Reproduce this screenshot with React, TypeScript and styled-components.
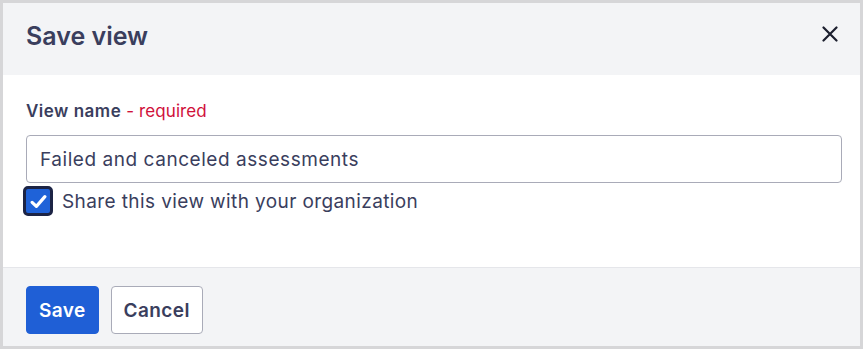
import React from "react";
import styled, { createGlobalStyle } from "styled-components";

const Global = createGlobalStyle`
  html, body { margin: 0; padding: 0; background: #d6d6d8; }
  body { font-family: Inter, "Noto Sans", sans-serif; }
`;

const Dialog = styled.div`
  box-sizing: border-box;
  width: 863px;
  height: 349px;
  border: 3px solid #d6d6d8;
  display: flex;
  flex-direction: column;
  background: #fff;
`;

const Header = styled.header`
  box-sizing: border-box;
  height: 72px;
  background: #f3f4f6;
  display: flex;
  align-items: flex-start;
  justify-content: space-between;
  padding: 18px 23px 0;
`;

const Title = styled.h2`
  margin: 0;
  font-size: 25px;
  line-height: 30px;
  font-weight: 600;
  color: #3a3e5d;
`;

const CloseButton = styled.button`
  border: 0;
  background: none;
  padding: 0;
  width: 24px;
  height: 24px;
  display: flex;
  align-items: center;
  justify-content: center;
  margin: 1px -5px 0 0;
  cursor: pointer;
`;

const Body = styled.div`
  flex: 1;
  padding: 26px 18px 0 23px;
`;

const Label = styled.label`
  display: block;
  font-size: 17px;
  line-height: 20px;
  font-weight: 600;
  letter-spacing: 0.5px;
  color: #3a3e5d;
  margin-bottom: 14px;
`;

const Required = styled.span`
  font-weight: 400;
  letter-spacing: 0.1px;
  color: #d0103a;
  margin-left: 5px;
`;

const Input = styled.input`
  box-sizing: border-box;
  display: block;
  width: 100%;
  height: 48px;
  border: 1px solid #a9abb8;
  border-radius: 4px;
  padding: 0 13px;
  font-family: inherit;
  font-size: 19px;
  letter-spacing: 0.55px;
  color: #3a3e5d;
  outline: none;
`;

const CheckRow = styled.label`
  display: flex;
  align-items: center;
  gap: 9px;
  margin-top: 3px;
  margin-left: -3px;
  font-size: 19px;
  letter-spacing: 0.4px;
  color: #3a3e5d;
`;

const Box = styled.span`
  box-sizing: border-box;
  width: 30px;
  height: 30px;
  border-radius: 5px;
  border: 3px solid #1c2445;
  background: #1f62d8;
  display: flex;
  align-items: center;
  justify-content: center;
`;

const Footer = styled.footer`
  box-sizing: border-box;
  height: 79px;
  background: #f3f4f6;
  border-top: 1px solid #e5e6ea;
  display: flex;
  align-items: flex-start;
  gap: 12px;
  padding: 18px 23px 0;
`;

const Button = styled.button<{ $primary?: boolean }>`
  height: 48px;
  padding: 0 12px;
  border-radius: 4px;
  font-family: inherit;
  font-size: 19px;
  letter-spacing: 0.4px;
  font-weight: 600;
  cursor: pointer;
  border: 1px solid ${(p) => (p.$primary ? "#1f5fd6" : "#a9abb8")};
  background: ${(p) => (p.$primary ? "#1f5fd6" : "#fff")};
  color: ${(p) => (p.$primary ? "#fff" : "#3a3e5d")};
`;

export default function App() {
  return (
    <>
      <Global />
      <Dialog>
        <Header>
          <Title>Save view</Title>
          <CloseButton aria-label="Close">
            <svg width="16" height="16" viewBox="0 0 16 16">
              <path d="M1.5 1.5L14.5 14.5M14.5 1.5L1.5 14.5" stroke="#1c1f2e" strokeWidth="2.2" strokeLinecap="round" />
            </svg>
          </CloseButton>
        </Header>
        <Body>
          <Label>
            View name<Required>- required</Required>
          </Label>
          <Input defaultValue="Failed and canceled assessments" />
          <CheckRow>
            <Box>
              <svg width="17" height="17" viewBox="0 0 16 16">
                <path d="M2 8.8L6 12.6L14 3.4" fill="none" stroke="#fff" strokeWidth="3" strokeLinecap="round" strokeLinejoin="round" />
              </svg>
            </Box>
            Share this view with your organization
          </CheckRow>
        </Body>
        <Footer>
          <Button $primary>Save</Button>
          <Button>Cancel</Button>
        </Footer>
      </Dialog>
    </>
  );
}
